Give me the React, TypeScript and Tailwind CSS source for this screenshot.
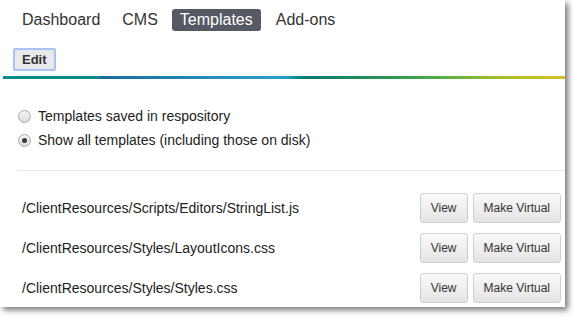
import React from "react";

const files = [
  "/ClientResources/Scripts/Editors/StringList.js",
  "/ClientResources/Styles/LayoutIcons.css",
  "/ClientResources/Styles/Styles.css",
];

function Radio({ checked, label }: { checked?: boolean; label: string }) {
  return (
    <label className="flex items-center h-[24px]">
      <span className="ml-[18px] w-[13px] h-[13px] rounded-full border border-[#a8a8a8] bg-[linear-gradient(#f4f4f4,#dcdcdc)] flex items-center justify-center">
        {checked && <span className="w-[5px] h-[5px] rounded-full bg-[#3a3a3a]" />}
      </span>
      <span className="ml-[7px] text-[14px] text-[#222]">{label}</span>
    </label>
  );
}

function Btn({ children }: { children: React.ReactNode }) {
  return (
    <button className="h-[30px] px-[10px] rounded-[3px] border border-[#cfcfcf] bg-[linear-gradient(#fafafa,#e4e4e4)] text-[12px] text-[#333]">
      {children}
    </button>
  );
}

export default function App() {
  return (
    <div className="w-[573px] h-[317px] bg-white" style={{ fontFamily: '"Liberation Sans", Arial, sans-serif' }}>
      <div className="w-[565px] h-[307px] bg-white shadow-[3px_3px_6px_rgba(0,0,0,0.55)] overflow-hidden">
        <div className="flex items-center h-[38px] pl-[14px] pt-[2px] text-[16px] text-[#333]">
          <span className="px-[8px] leading-[22px]">Dashboard</span>
          <span className="ml-[6px] px-[8px] leading-[22px]">CMS</span>
          <span className="ml-[6px] px-[8px] leading-[22px] rounded-[3px] bg-[#545963] text-white">Templates</span>
          <span className="ml-[7px] px-[8px] leading-[22px]">Add-ons</span>
        </div>
        <div className="h-[38px] pl-[13px] pt-[9px]">
          <span className="inline-flex items-center h-[23px] px-[7px] rounded-[2px] border-2 border-[#a9c3f7] bg-[#e9e9e9] text-[13px] font-bold text-[#333]">
            Edit
          </span>
        </div>
        <div className="h-[3px] ml-[3px] bg-[linear-gradient(90deg,#0b8b8c_0%,#0b8b8c_17%,#176d98_17.5%,#2591c6_40%,#2aa0cc_50%,#0a9394_52%,#087a6e_54%,#2f9a4f_70%,#4aa84c_76%,#9fbf2e_88%,#dcc024_100%)]" />
        <div className="flex flex-col pt-[25px]">
          <Radio label="Templates saved in respository" />
          <Radio checked label="Show all templates (including those on disk)" />
        </div>
        <div className="ml-[18px] mt-[18px] h-px bg-[#e6e6e6]" />
        <div className="flex flex-col pt-[17px]">
          {files.map((f) => (
            <div key={f} className="flex items-center h-[40px] pl-[22px] pr-[4px]">
              <span className="flex-1 text-[14px] text-[#222]">{f}</span>
              <div className="flex gap-[5px]">
                <Btn>View</Btn>
                <Btn>Make Virtual</Btn>
              </div>
            </div>
          ))}
        </div>
      </div>
    </div>
  );
}
